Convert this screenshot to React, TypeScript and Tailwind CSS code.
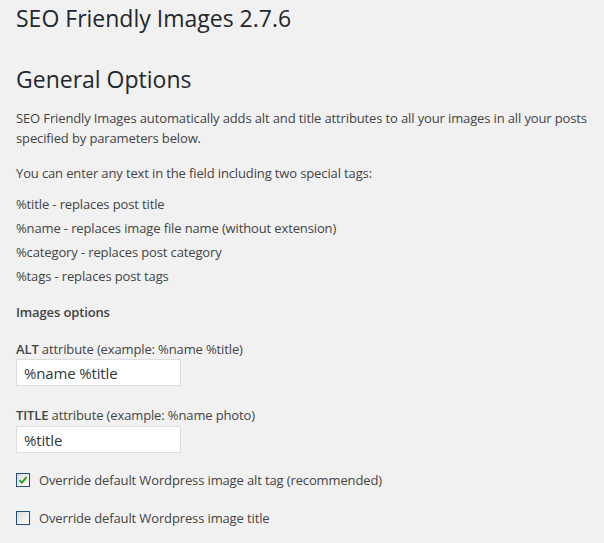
import React from 'react';

const Checkbox: React.FC<{ checked?: boolean }> = ({ checked }) => (
  <span className="inline-flex h-[14px] w-[14px] shrink-0 items-center justify-center border border-[#1c5180] bg-gradient-to-br from-[#dcdcdc] to-[#ffffff]">
    {checked && (
      <svg width="10" height="10" viewBox="0 0 10 10">
        <path d="M1.5 5.2 L4 7.6 L8.6 2.2" fill="none" stroke="#21a121" strokeWidth="1.9" />
      </svg>
    )}
  </span>
);

export default function App() {
  const tags = [
    '%title - replaces post title',
    '%name - replaces image file name (without extension)',
    '%category - replaces post category',
    '%tags - replaces post tags',
  ];

  return (
    <div
      className="min-h-[543px] w-full bg-[#f1f1f1] pl-4 text-[13px] text-[#444]"
      style={{ fontFamily: '"Open Sans", "Liberation Sans", sans-serif' }}
    >
      <h1 className="text-[23px] font-normal leading-[36px] text-[#23282d]">SEO Friendly Images 2.7.6</h1>
      <h2 className="mt-[25px] text-[23px] font-normal leading-[36px] text-[#23282d]">General Options</h2>

      <div className="tracking-[-0.13px]">
        <p className="mt-[11px] leading-[20px]">
          SEO Friendly Images automatically adds alt and title attributes to all your images in all your posts
          specified by parameters below.
        </p>
        <p className="mt-[15px] leading-[20px]">You can enter any text in the field including two special tags:</p>

        <div className="mt-[9px]">
          {tags.map((t) => (
            <div key={t} className="leading-[24px]">
              {t}
            </div>
          ))}
        </div>

        <div className="mt-[14px] font-semibold leading-[20px]">Images options</div>

        <div className="mt-[17px] leading-[20px]">
          <span className="font-semibold">ALT</span> attribute (example: %name %title)
        </div>
        <input
          readOnly
          value="%name %title"
          className="block h-[27px] w-[165px] border border-[#ddd] bg-white px-[7px] text-[15px] tracking-[-0.15px] text-[#32373c] outline-none"
          style={{ fontFamily: '"Open Sans", "Liberation Sans", sans-serif' }}
        />

        <div className="mt-[19px] leading-[20px]">
          <span className="font-semibold">TITLE</span> attribute (example: %name photo)
        </div>
        <input
          readOnly
          value="%title"
          className="mt-px block h-[27px] w-[165px] border border-[#ddd] bg-white px-[7px] text-[15px] tracking-[-0.15px] text-[#32373c] outline-none"
          style={{ fontFamily: '"Open Sans", "Liberation Sans", sans-serif' }}
        />

        <div className="mt-[17px] flex items-center gap-[9px] leading-[20px]">
          <Checkbox checked />
          <span>Override default Wordpress image alt tag (recommended)</span>
        </div>
        <div className="mt-[18px] flex items-center gap-[9px] leading-[20px]">
          <Checkbox />
          <span>Override default Wordpress image title</span>
        </div>
      </div>
    </div>
  );
}
